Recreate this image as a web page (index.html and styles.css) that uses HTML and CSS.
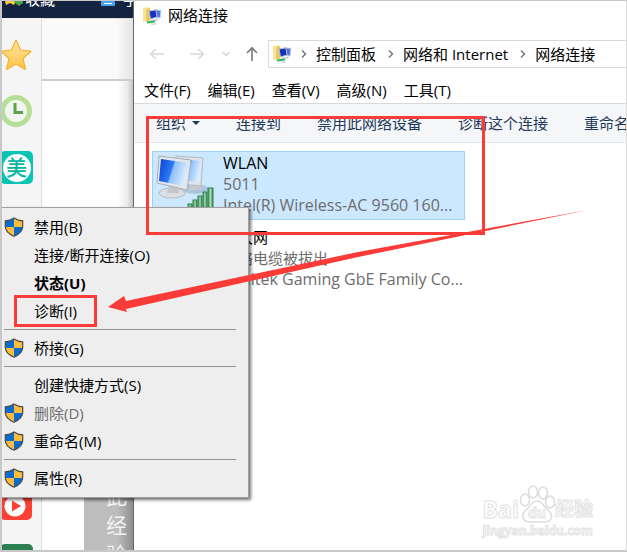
FILE: index.html
```html
<!DOCTYPE html>
<html lang="zh-CN">
<head>
<meta charset="UTF-8">
<meta name="viewport" content="width=device-width, initial-scale=1.0">
<title>网络连接</title>
<link rel="stylesheet" href="styles.css">
</head>
<body>
    <!-- shared icons -->
    <svg class="defs" aria-hidden="true">
        <defs>
            <linearGradient id="screen" x1="0" y1="0" x2="1" y2="0.3">
                <stop offset="0" stop-color="#0a3fd0"/>
                <stop offset="0.5" stop-color="#2b7af5"/>
                <stop offset="0.55" stop-color="#8fc0fb"/>
                <stop offset="1" stop-color="#d5ebff"/>
            </linearGradient>
            <linearGradient id="bar" x1="0" y1="0" x2="1" y2="0">
                <stop offset="0" stop-color="#3f8f5f"/>
                <stop offset="0.5" stop-color="#a9dcb0"/>
                <stop offset="1" stop-color="#2f8052"/>
            </linearGradient>
            <linearGradient id="gold" x1="0" y1="0" x2="0" y2="1">
                <stop offset="0" stop-color="#ffe9a0"/>
                <stop offset="1" stop-color="#ffc04a"/>
            </linearGradient>
        </defs>
        <symbol id="shield" viewBox="0 0 20 20">
            <path d="M10 1C7.500 2.700 4.500 3.700 1.300 3.800V9.500C1.300 14 5 17 10 19.200C15 17 18.700 14 18.700 9.500V3.800C15.500 3.700 12.500 2.700 10 1Z" fill="#0a6bd0"/>
            <path d="M10 1C12.500 2.700 15.500 3.700 18.700 3.800V10H10Z" fill="#fdbd3a"/>
            <path d="M10 10V19.200C5 17 1.400 14 1.300 10Z" fill="#fdbd3a"/>
            <path d="M10 1C7.500 2.700 4.500 3.700 1.300 3.800V9.500C1.300 14 5 17 10 19.200C15 17 18.700 14 18.700 9.500V3.800C15.500 3.700 12.500 2.700 10 1Z" fill="none" stroke="#4a4a4a" stroke-width="1.200"/>
        </symbol>
        <symbol id="netfolder" viewBox="0 0 20 20">
            <path d="M1 2L7 1V15L1 16Z" fill="#f8e39a"/>
            <path d="M4 3L8 2V15L4 16Z" fill="#ecc95c"/>
            <path d="M12 3.500L19 4.500L18 12L12 11Z" fill="#4f74e0" stroke="#c3cbd8"/>
            <path d="M7 5L14 4L15 11L8.500 13Z" fill="#1531c4" stroke="#b6bfd0"/>
            <path d="M8 14.500L16 12.500L17 14L10 16Z" fill="#c9ced8"/>
            <path d="M5 16.500L13 15.500" stroke="#2cb866" stroke-width="2"/>
            <path d="M9 18H14" stroke="#b9c4cc" stroke-width="1"/>
        </symbol>
        <symbol id="chevron" viewBox="0 0 6 10">
            <path d="M1 1.500L4.500 5L1 8.500" fill="none" stroke="#777" stroke-width="1.500"/>
        </symbol>
    </svg>

    <div class="screen">
        <div class="browser">
            <div class="browser-bar">
                <svg class="bar-star" width="20" height="12" viewBox="0 0 20 12"><path d="M0 0H11L9 4L5 2L1 4Z" fill="#f9c944"/><path d="M9 0H18V2L14 5L10 2Z" fill="#4fa34a"/></svg>
                <span>收藏</span>
                <svg class="bar-phone" width="14" height="12" viewBox="0 0 14 12"><rect width="14" height="5" rx="1" fill="#4aa5ee"/><path d="M3 2.500H11" stroke="#fff"/></svg>
                <span>手</span>
            </div>
            <div class="browser-body">
                <nav class="side">
                    <div class="side-group">
                        <svg width="32" height="32" viewBox="0 0 32 32"><path d="M16 1L20.500 11L31 12.200L23 19.500L25.500 30.500L16 25L6.500 30.500L9 19.500L1 12.200L11.500 11Z" fill="url(#gold)" stroke="#f5b32c" stroke-width="1.200" stroke-linejoin="round"/></svg>
                        <svg width="32" height="32" viewBox="0 0 32 32"><circle cx="16" cy="16" r="13.500" fill="#f3f6f0" stroke="#b5df97" stroke-width="5"/><path d="M15 8V17.500H23" fill="none" stroke="#5ba04a" stroke-width="3"/></svg>
                        <span class="app-mei"><b>美</b></span>
                        <span class="app-orange"></span>
                    </div>
                    <div class="side-group">
                        <svg width="32" height="32" viewBox="0 0 32 32"><rect width="32" height="32" rx="5" fill="#fb4034"/><circle cx="15" cy="18" r="10.500" fill="#fff"/><path d="M12 12.500L21 18L12 23.500Z" fill="#fb4034"/></svg>
                        <span class="app-green"></span>
                    </div>
                </nav>
                <div class="page">
                    <div class="page-head"></div>
                    <div class="page-tab">此经验</div>
                </div>
            </div>
        </div>

        <main class="window">
            <header class="title-bar">
                <svg width="20" height="20"><use href="#netfolder"/></svg>
                <h1>网络连接</h1>
            </header>

            <div class="nav-bar">
                <button type="button" aria-label="后退"><svg width="16" height="14" viewBox="0 0 16 14"><path d="M15 7H1.500M7 2L1.500 7L7 12" fill="none" stroke="#d9d9d9" stroke-width="1.500"/></svg></button>
                <button type="button" aria-label="前进" class="forward"><svg width="16" height="14" viewBox="0 0 16 14"><path d="M1 7H14.500M9 2L14.500 7L9 12" fill="none" stroke="#d9d9d9" stroke-width="1.500"/></svg></button>
                <button type="button" aria-label="最近" class="recent"><svg width="10" height="8" viewBox="0 0 10 8"><path d="M1.500 2L5 5.500L8.500 2" fill="none" stroke="#d4d4d4" stroke-width="1.500"/></svg></button>
                <button type="button" aria-label="向上" class="up"><svg width="12" height="16" viewBox="0 0 12 16"><path d="M6 15V2M1 7L6 1.800L11 7" fill="none" stroke="#808080" stroke-width="1.700"/></svg></button>
                <div class="address">
                    <svg width="20" height="20"><use href="#netfolder"/></svg>
                    <svg class="sep" width="6" height="10"><use href="#chevron"/></svg>
                    <a href="#">控制面板</a>
                    <svg class="sep" width="6" height="10"><use href="#chevron"/></svg>
                    <a href="#">网络和 Internet</a>
                    <svg class="sep" width="6" height="10"><use href="#chevron"/></svg>
                    <a href="#">网络连接</a>
                </div>
            </div>

            <div class="menu-bar">
                <button type="button">文件(F)</button>
                <button type="button">编辑(E)</button>
                <button type="button">查看(V)</button>
                <button type="button">高级(N)</button>
                <button type="button">工具(T)</button>
            </div>

            <div class="tool-bar">
                <button type="button">组织<span class="caret"></span></button>
                <button type="button">连接到</button>
                <button type="button">禁用此网络设备</button>
                <button type="button">诊断这个连接</button>
                <button type="button">重命名此连接</button>
            </div>

            <ul class="connections">
                <li class="connection selected">
                    <svg width="64" height="67" viewBox="0 0 64 67">
                        <ellipse cx="42" cy="37" rx="13" ry="5" fill="#a9c6dd"/>
                        <path d="M38 32L46 31L49 37L36 39Z" fill="#c6cbd0"/>
                        <path d="M23 4L50 6L48 34L27 32Z" fill="#dfe3e8" stroke="#b4bac2"/>
                        <path d="M27 7L48 9L46 30L29 28Z" fill="url(#screen)"/>
                        <ellipse cx="19" cy="41" rx="13" ry="5" fill="#dcdfe2" stroke="#b7bcc2"/>
                        <path d="M16 32L25 33L26 41L14 41Z" fill="#c3c7cc"/>
                        <path d="M6 4L38 8L34 38L4 31Z" fill="#e3e6ea" stroke="#aab0b8"/>
                        <path d="M8 7L35 11L31 34L6 29Z" fill="url(#screen)"/>
                        <g fill="url(#bar)" stroke="#2f7f50"><rect x="35" y="52" width="4" height="15"/><rect x="40" y="48" width="4" height="19"/><rect x="45" y="44" width="4" height="23"/><rect x="50" y="40" width="4" height="27"/><rect x="55" y="36" width="5" height="31"/></g>
                    </svg>
                    <div class="info">
                        <h2 class="latin">WLAN</h2>
                        <p class="latin">5011</p>
                        <p class="latin">Intel(R) Wireless-AC 9560 160...</p>
                    </div>
                </li>
                <li class="connection">
                    <svg width="64" height="67" viewBox="0 0 64 67"></svg>
                    <div class="info">
                        <h2>以太网</h2>
                        <p>网络电缆被拔出</p>
                        <p class="latin">Realtek Gaming GbE Family Co...</p>
                    </div>
                </li>
            </ul>

            <div class="watermark">
                <div class="logo">
                    <span>Bai</span>
                    <span class="paw">
                        <svg width="36" height="38" viewBox="0 0 36 38" fill="#fff" stroke="#dcdcdc" stroke-width="1.500"><ellipse cx="6" cy="15" rx="4.500" ry="6"/><ellipse cx="14" cy="7" rx="4.500" ry="6"/><ellipse cx="24" cy="8" rx="4.500" ry="6"/><ellipse cx="31" cy="17" rx="4.500" ry="6"/><path d="M18 16C12 16 12 22 7 25C1 30 4 37 11 37H26C33 37 35 30 29 25C24 22 24 16 18 16Z"/></svg>
                        <em>du</em>
                    </span>
                    <span>经验</span>
                </div>
                <div class="site">jingyan.baidu.com</div>
            </div>
        </main>

        <div class="context-menu">
            <button type="button"><svg width="20" height="20"><use href="#shield"/></svg>禁用(B)</button>
            <button type="button"><i></i>连接/断开连接(O)</button>
            <button type="button" class="default"><i></i>状态(U)</button>
            <button type="button"><i></i>诊断(I)</button>
            <hr>
            <button type="button"><svg width="20" height="20"><use href="#shield"/></svg>桥接(G)</button>
            <hr>
            <button type="button"><i></i>创建快捷方式(S)</button>
            <button type="button" disabled><svg width="20" height="20"><use href="#shield"/></svg>删除(D)</button>
            <button type="button"><svg width="20" height="20"><use href="#shield"/></svg>重命名(M)</button>
            <hr>
            <button type="button"><svg width="20" height="20"><use href="#shield"/></svg>属性(R)</button>
        </div>

        <!-- red marks drawn over the windows -->
        <div class="mark mark-wlan"></div>
        <div class="mark mark-diagnose"></div>
        <svg class="arrow" width="482" height="104" viewBox="0 0 482 104"><path d="M0 98L16 87L18 92L250 43L480 1L250 48L18 100L19 103Z" fill="#fb3b38"/></svg>
    </div>
</body>
</html>
```
FILE: styles.css
```css
* {
    box-sizing: border-box;
}

body {
    margin: 0;
    font-family: "Open Sans", "Noto Sans CJK SC", sans-serif;
    font-size: 15px;
    line-height: 21px;
    color: #000;
    background: #fff;
}

h1, h2, p, ul {
    margin: 0;
    padding: 0;
    font-size: 15px;
    font-weight: normal;
}

button {
    display: flex;
    align-items: center;
    padding: 0;
    border: none;
    background: none;
    font: inherit;
    color: inherit;
    white-space: nowrap;
}

a {
    color: inherit;
    text-decoration: none;
    white-space: nowrap;
}

svg {
    display: block;
    flex: none;
}

.defs {
    position: absolute;
    width: 0;
    height: 0;
}

.screen {
    position: relative;
    display: flex;
    height: 100vh;
    overflow: hidden;
    border: 1px solid #c8c8c8;
    border-left-width: 2px;
    border-bottom-width: 2px;
    border-right-color: #ddd;
}

/* browser behind the window */
.browser {
    display: flex;
    flex-direction: column;
    flex: none;
    width: 131px;
}

.browser-bar {
    display: flex;
    height: 17px;
    overflow: hidden;
    background: #14233f;
    color: #fff;
    line-height: 0;
    white-space: nowrap;
}

.browser-bar span {
    margin-top: -2px;
}

.bar-star {
    margin-left: 3px;
}

.bar-phone {
    margin: 0 8px 0 46px;
}

.browser-body {
    display: flex;
    flex: 1;
    min-height: 0;
}

.side {
    display: flex;
    flex-direction: column;
    justify-content: space-between;
    width: 40px;
    padding-top: 21px;
    border-right: 1px solid #ddd;
    background: #f5f5f5;
}

.side-group {
    display: flex;
    flex-direction: column;
    gap: 24px;
    margin-left: -2px;
}

.app-mei {
    display: flex;
    align-items: center;
    justify-content: center;
    width: 33px;
    height: 33px;
    border-radius: 5px;
    background: #07c5b5;
}

.app-mei b {
    width: 28px;
    height: 28px;
    border-radius: 50%;
    background: #fff;
    color: #07b5a5;
    font-size: 21px;
    font-weight: 500;
    line-height: 26px;
    text-align: center;
}

.app-orange {
    width: 32px;
    height: 32px;
    border-radius: 5px;
    background: #fbad3c;
}

.app-green {
    width: 33px;
    height: 6px;
    border-radius: 5px 5px 0 0;
    background: #2a8050;
}

.page {
    display: flex;
    flex-direction: column;
    justify-content: space-between;
    flex: 1;
    background: linear-gradient(to left, #c4c4c4, #ededed 6px, #fff 16px);
}

.page-head {
    height: 63px;
    border-top: 1px solid #ddd;
    border-bottom: 2px solid #ccc;
    background: linear-gradient(to left, #e4e4e4, #fafafa 16px);
}

.page-tab {
    align-self: flex-end;
    width: 49px;
    height: 72px;
    padding: 4px 12px 0 22px;
    overflow: hidden;
    background: linear-gradient(to left, #8f8f8f, #bdbdbd 16px);
    color: #f2f2f2;
    font-size: 21px;
    line-height: 29px;
    word-break: break-all;
}

/* network connections window */
.window {
    position: relative;
    flex: 1;
    min-width: 0;
    overflow: hidden;
    border-left: 1px solid #666;
    background: #fff;
}

.title-bar {
    display: flex;
    align-items: center;
    gap: 6px;
    height: 29px;
    padding-left: 8px;
}

.nav-bar {
    display: flex;
    align-items: center;
    height: 48px;
    padding-left: 15px;
}

.nav-bar .forward {
    margin-left: 24px;
}

.nav-bar .recent {
    margin-left: 16px;
}

.nav-bar .up {
    margin: 0 10px 0 15px;
}

.address {
    display: flex;
    align-items: center;
    flex: 1;
    height: 28px;
    padding-left: 3px;
    overflow: hidden;
    border: 1px solid #d9d9d9;
    border-right: none;
}

.address .sep {
    margin: 0 9px 0 12px;
}

.address svg:first-child + .sep {
    margin-left: 9px;
}

.menu-bar {
    display: flex;
    align-items: center;
    gap: 17px;
    height: 25px;
    padding-left: 10px;
}

.tool-bar {
    display: flex;
    align-items: center;
    gap: 36px;
    height: 40px;
    padding-left: 22px;
    overflow: hidden;
    border-top: 1px solid #d9d9d9;
    border-bottom: 1px solid #e5e7e9;
    background: #f5f6f7;
    color: #1e395b;
}

.caret {
    margin-left: 6px;
    border: 4px solid transparent;
    border-top-color: #1e395b;
    border-bottom: none;
}

.connections {
    display: flex;
    flex-direction: column;
    gap: 5px;
    padding: 8px 18px;
    list-style: none;
}

.connection {
    display: flex;
    align-items: center;
    gap: 6px;
    max-width: 313px;
    height: 69px;
    border: 1px solid transparent;
    white-space: nowrap;
}

.connection.selected {
    border-color: #99d1ff;
    background: #cce8ff;
}

.info {
    padding-bottom: 2px;
}

.info p {
    color: #6d6d6d;
}

.info .latin {
    font-size: 16px;
}

.watermark {
    position: absolute;
    right: 33px;
    bottom: 11px;
    color: #fff;
    font-weight: bold;
    -webkit-text-stroke: 1px #e2e2e2;
}

.logo {
    display: flex;
    align-items: flex-end;
    justify-content: space-between;
    font-size: 19px;
    line-height: 28px;
}

.logo > span:first-child {
    font-size: 23px;
}

.paw {
    position: relative;
}

.paw em {
    position: absolute;
    left: 9px;
    bottom: 0;
    font-size: 14px;
    font-style: normal;
    line-height: 20px;
}

.site {
    font-size: 12px;
    line-height: 16px;
}

/* context menu */
.context-menu {
    position: absolute;
    top: 206px;
    left: 0;
    width: 247px;
    padding: 5px 0;
    border: 1px solid #a0a0a0;
    border-left: none;
    background: #eee;
    box-shadow: 2px 2px 3px rgba(0, 0, 0, 0.55);
}

.context-menu button {
    width: 100%;
    height: 28px;
    gap: 10px;
    padding-left: 2px;
}

.context-menu i {
    width: 20px;
}

.context-menu .default {
    font-weight: bold;
}

.context-menu button:disabled {
    color: #6d6d6d;
}

.context-menu hr {
    height: 1px;
    margin: 4px 12px 4px 2px;
    border: none;
    background: #919191;
}

/* marks */
.mark {
    position: absolute;
    border: 3px solid #fb3b38;
}

.mark-wlan {
    top: 115px;
    left: 144px;
    width: 339px;
    height: 119px;
}

.mark-diagnose {
    top: 294px;
    left: 12px;
    width: 83px;
    height: 32px;
}

.arrow {
    position: absolute;
    top: 208px;
    left: 106px;
}
```
